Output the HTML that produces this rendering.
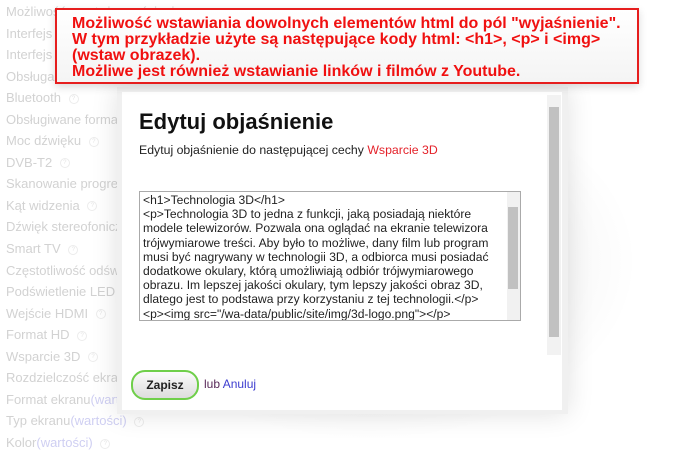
<!DOCTYPE html>
<html><head><meta charset="utf-8"><style>
body{margin:0;width:700px;height:443px;overflow:hidden;background:#fff;font-family:"Liberation Sans",sans-serif;position:relative}
.list{position:absolute;left:6px;top:2px;color:#d2d2d2;font-size:13px}
.list div{height:21.55px;line-height:19px;white-space:nowrap}
.q{display:inline-block;width:8px;height:8px;border:1px solid #ececec;border-radius:50%;font-size:6px;line-height:8px;text-align:center;color:#e4e4e4;vertical-align:middle;margin-left:4px}
.b{color:#cfcff2}
.shade{position:absolute;left:100px;top:80px;width:540px;height:363px;background:radial-gradient(ellipse at center,rgba(0,0,0,0.1),rgba(0,0,0,0) 70%)}
.frame{position:absolute;left:117px;top:87px;width:451px;height:327px;background:#f0f0f0;box-shadow:0 0 25px rgba(0,0,0,.12)}
.dlg{position:absolute;left:122px;top:92px;width:440px;height:318px;background:#fff}
.sb{position:absolute;left:547px;top:95px;width:14px;height:260px;background:#f2f2f2}
.sb .t{position:absolute;left:2px;top:12px;width:10px;height:230px;background:#c1c1c1}
h1{position:absolute;left:139px;top:109px;margin:0;font-size:22px;font-weight:bold;color:#111}
.sub{position:absolute;left:139px;top:143px;font-size:12.3px;color:#222}
.sub span{color:#e4222a}
.ta{position:absolute;left:139px;top:191px;width:382px;height:130px;border:1px solid #aaa;box-sizing:border-box;font-size:12.1px;line-height:14.2px;color:#222;padding:1px 16px 0 3px;overflow:hidden;white-space:nowrap}
.ta .s{position:absolute;right:0;top:0;width:13px;height:100%;background:#f1f1f1}
.ta .s i{position:absolute;left:1px;top:15px;width:10px;height:82px;background:#c1c1c1}
.btn{position:absolute;left:131px;top:370px;width:64px;height:26px;border:2px solid #6fcf4a;border-radius:14px;background:linear-gradient(#fbfbfb,#ddd);font-size:12px;font-weight:bold;text-align:center;line-height:26px;color:#222}
.lub{position:absolute;left:204px;top:377px;font-size:12px;color:#5a2a5a}
.lub span{color:#3c3ccf}
.red{position:absolute;left:55px;top:8px;width:584px;height:76px;border:2px solid #e61e1e;background:linear-gradient(#fff,#f4f4f4);color:#f01010;font-weight:bold;font-size:16px;line-height:16px;padding:6px 0 0 15px;box-sizing:border-box;box-shadow:0 3px 8px rgba(0,0,0,.15);white-space:nowrap}
</style></head><body>
<div class="list">
<div>Możliwość montażu na ścianie <span class="q">?</span></div>
<div>Interfejs USB <span class="q">?</span></div>
<div>Interfejs Ethernet <span class="q">?</span></div>
<div>Obsługa Wi-Fi <span class="q">?</span></div>
<div>Bluetooth <span class="q">?</span></div>
<div>Obsługiwane formaty</div>
<div>Moc dźwięku <span class="q">?</span></div>
<div>DVB-T2 <span class="q">?</span></div>
<div>Skanowanie progresywne</div>
<div>Kąt widzenia <span class="q">?</span></div>
<div>Dźwięk stereofoniczny</div>
<div>Smart TV <span class="q">?</span></div>
<div>Częstotliwość odświeżania</div>
<div>Podświetlenie LED</div>
<div>Wejście HDMI <span class="q">?</span></div>
<div>Format HD <span class="q">?</span></div>
<div>Wsparcie 3D <span class="q">?</span></div>
<div>Rozdzielczość ekranu</div>
<div>Format ekranu<span class="b">(wartości)</span></div>
<div>Typ ekranu<span class="b">(wartości)</span> <span class="q">?</span></div>
<div>Kolor<span class="b">(wartości)</span> <span class="q">?</span></div>
</div>
<div class="shade"></div>
<div class="frame"></div>
<div class="dlg"></div>
<div class="sb"><div class="t"></div></div>
<h1>Edytuj objaśnienie</h1>
<div class="sub">Edytuj objaśnienie do następującej cechy <span>Wsparcie 3D</span></div>
<div class="ta">&lt;h1&gt;Technologia 3D&lt;/h1&gt;<br>&lt;p&gt;Technologia 3D to jedna z funkcji, jaką posiadają niektóre<br>modele telewizorów. Pozwala ona oglądać na ekranie telewizora<br>trójwymiarowe treści. Aby było to możliwe, dany film lub program<br>musi być nagrywany w technologii 3D, a odbiorca musi posiadać<br>dodatkowe okulary, którą umożliwiają odbiór trójwymiarowego<br>obrazu. Im lepszej jakości okulary, tym lepszy jakości obraz 3D,<br>dlatego jest to podstawa przy korzystaniu z tej technologii.&lt;/p&gt;<br>&lt;p&gt;&lt;img src="/wa-data/public/site/img/3d-logo.png"&gt;&lt;/p&gt;<div class="s"><i></i></div></div>
<div class="btn">Zapisz</div>
<div class="lub">lub <span>Anuluj</span></div>
<div class="red">Możliwość wstawiania dowolnych elementów html do pól "wyjaśnienie".<br>W tym przykładzie użyte są następujące kody html: &lt;h1&gt;, &lt;p&gt; i &lt;img&gt;<br>(wstaw obrazek).<br>Możliwe jest również wstawianie linków i filmów z Youtube.</div>
</body></html>
